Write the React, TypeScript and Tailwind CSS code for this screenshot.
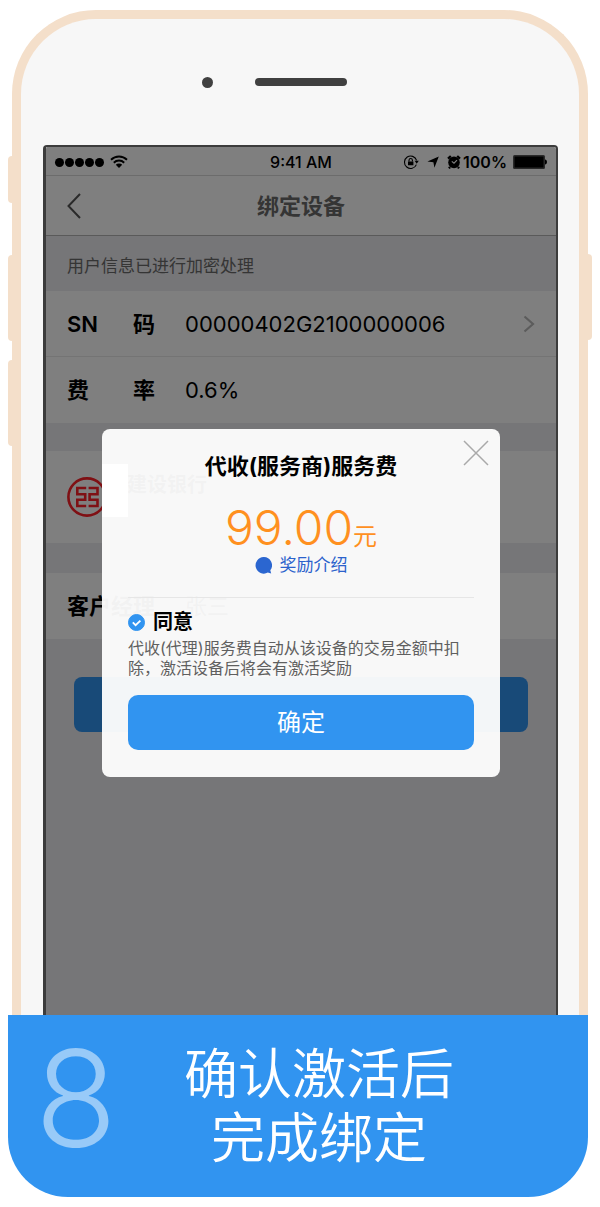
import { useState } from "react";
import type { ReactNode } from "react";

const SIDE_BUTTONS = [
  "-left-[13px] top-[137px] h-[47px] rounded-l",
  "-left-[13px] top-[236px] h-[86px] rounded-l",
  "-left-[13px] top-[341px] h-[86px] rounded-l",
  "-right-[13px] top-[235px] h-[86px] rounded-r",
];

export default function App() {
  return (
    <main className="flex min-h-screen flex-col bg-white pt-[10px] pb-[10px] font-[Inter,'Noto_Sans_CJK_SC',sans-serif]">
      <PhoneFrame>
        <StatusBar />
        <DevicePage />
        <div className="absolute inset-0 flex items-start justify-center bg-black/50 px-14 pt-[282px]">
          <FeeDialog />
        </div>
      </PhoneFrame>

      {/* Paso */}
      <footer className="mr-3 ml-2 flex h-[182px] rounded-b-[60px] bg-[#3194f0] text-white">
        <span className="w-[136px] pt-4 text-center text-[134px] leading-[134px] font-[350] text-white/50">
          8
        </span>
        <h1 className="pt-7 pl-[40px] text-center text-[54px] leading-[64px] font-[350]">
          确认激活后
          <br />
          完成绑定
        </h1>
      </footer>
    </main>
  );
}

function PhoneFrame({ children }: { children: ReactNode }) {
  return (
    <div className="relative mx-3 flex flex-1 flex-col rounded-t-[84px] border-[9px] border-b-0 border-[#f4dfca] bg-[#f7f7f7] pr-[21px] pl-[22px]">
      {SIDE_BUTTONS.map((position) => (
        <span
          key={position}
          className={`absolute w-1 bg-[#f4dfca] ${position}`}
        />
      ))}
      <div className="grid h-[126px] grid-cols-[1fr_auto_1fr] items-center gap-[42px]">
        <span className="size-[11px] justify-self-end rounded-full bg-[#404040]" />
        <span className="h-2 w-[92px] rounded-full bg-[#404040]" />
      </div>
      <div className="relative flex flex-1 flex-col overflow-hidden rounded-t border-2 border-b-0 border-l-[3px] border-[#3c3c3c] bg-[#ececf0]">
        {children}
      </div>
    </div>
  );
}

function StatusBar() {
  return (
    <div className="grid h-[29px] grid-cols-[1fr_auto_1fr] items-center border-b border-[#d8d8d8] bg-white px-[9px] pt-[2px] text-base leading-5 font-semibold text-black">
      <div className="flex items-center gap-[6px]">
        <div className="flex gap-px">
          {[1, 2, 3, 4, 5].map((i) => (
            <span key={i} className="size-[9px] rounded-full bg-black" />
          ))}
        </div>
        <svg viewBox="0 0 18 14" className="h-[14px] w-[18px]" fill="none">
          <path
            d="M1 4.8a11.4 11.4 0 0 1 16 0M3.8 7.7a7.4 7.4 0 0 1 10.4 0"
            stroke="#000"
            strokeWidth="1.9"
          />
          <path d="M5.8 9.8a4.6 4.6 0 0 1 6.4 0L9 13z" fill="#000" />
        </svg>
      </div>
      <span className="font-medium">9:41 AM</span>
      <div className="flex items-center justify-end">
        <svg viewBox="0 0 16 16" className="mr-2 size-4" fill="none">
          <path
            d="M13.6 6.4A6.2 6.2 0 1 0 13.4 10.6"
            stroke="#000"
            strokeWidth="1.1"
          />
          <path d="M11.6 6.8h4.2l-2.1 3z" fill="#000" />
          <path d="M5 7.4h5.4v3.8H5z" fill="#000" />
          <path
            d="M6 7.6V6.2a1.7 1.7 0 0 1 3.4 0v1.4"
            stroke="#000"
            strokeWidth="1.1"
          />
        </svg>
        <svg viewBox="0 0 12 12" className="mr-2 size-3">
          <path d="M11.8.4 7.4 11.8 6.4 6.2.4 5.4z" />
        </svg>
        <svg viewBox="0 0 14 14" className="mr-[2px] size-[14px]" fill="none">
          <circle cx="7" cy="7.4" r="5.8" fill="#000" />
          <path
            d="M1 3.6 3.8 1M13 3.6 10.2 1M3 12l-1 1.4M11 12l1 1.4"
            stroke="#000"
            strokeWidth="2.2"
          />
          <path d="m4.8 6.4 2.2 1.8L10 5.2" stroke="#fff" strokeWidth="1.2" />
        </svg>
        <span>100%</span>
        <svg viewBox="0 0 34 14" className="ml-[6px] h-[14px] w-[34px]">
          <rect width="32" height="14" rx="1.5" fill="#555" />
          <rect x="1.5" y="1.5" width="29" height="11" />
          <path d="M32 4.5c2.6 0 2.6 5 0 5z" />
        </svg>
      </div>
    </div>
  );
}

function DevicePage() {
  return (
    <div className="flex flex-col text-black">
      <header className="grid h-[60px] grid-cols-[1fr_auto_1fr] items-center border-b border-[#b4b4b4] bg-white px-[21px] text-[#6a6a6a]">
        <button type="button" aria-label="返回">
          <svg
            viewBox="0 0 14 26"
            className="h-[26px] w-[14px]"
            fill="none"
            stroke="#555"
            strokeWidth="2"
          >
            <path d="M13 1 1.5 13 13 25" />
          </svg>
        </button>
        <h2 className="text-[22px] leading-7 font-bold">绑定设备</h2>
      </header>

      <p className="px-[21px] pt-[18px] pb-[13px] text-[17px] leading-6 text-[#6a6a6a]">
        用户信息已进行加密处理
      </p>

      <div className="divide-y divide-[#e8e8e8] bg-white">
        <InfoRow label={["SN", "码"]} value="00000402G2100000006" arrow />
        <InfoRow label={["费", "率"]} value="0.6%" />
      </div>

      {/* Banco */}
      <div className="mt-7 flex h-[92px] items-center bg-white px-[21px]">
        <BankLogo />
        <p className="-mt-6 pl-5 text-[20px] leading-6 font-bold">建设银行</p>
      </div>

      <div className="mt-[30px] bg-white">
        <InfoRow label={["客户经理"]} value="张三" />
      </div>

      <button
        type="button"
        aria-label="提交"
        className="mx-7 mt-[38px] h-[55px] rounded-lg bg-[#3194f0]"
      />
    </div>
  );
}

type InfoRowProps = {
  label: string[];
  value: string;
  arrow?: boolean;
};

function InfoRow({ label, value, arrow }: InfoRowProps) {
  return (
    <div className="flex h-[66px] items-center px-[21px] text-[22px] leading-7">
      <div className="flex w-[88px] justify-between font-semibold">
        {label.map((part) => (
          <span key={part}>{part}</span>
        ))}
      </div>
      <span className="flex-1 pl-[30px]">{value}</span>
      {arrow && (
        <svg
          viewBox="0 0 12 18"
          className="h-[18px] w-3"
          fill="none"
          stroke="#b8b8b8"
          strokeWidth="2.2"
        >
          <path d="m1.5 1.5 8.5 7.5-8.5 7.5" />
        </svg>
      )}
    </div>
  );
}

function BankLogo() {
  return (
    <svg
      viewBox="0 0 40 40"
      className="size-10"
      fill="none"
      stroke="#ff2028"
      strokeWidth="2.6"
    >
      <circle cx="20" cy="20" r="18.6" />
      <path d="M19.2 11h-8.900v6.200h7.900v5.600h-7.900V29h8.900M21.600 11h8.900v6.200h-7.900v5.600h7.900V29h-8.900" />
    </svg>
  );
}

function FeeDialog() {
  const [agreed, setAgreed] = useState(true);

  return (
    <section
      role="dialog"
      aria-labelledby="fee-title"
      className="relative w-full rounded-lg bg-white/95 px-[26px] pt-[22px] pb-[27px]"
    >
      <span className="absolute top-[35px] left-0 h-[53px] w-[26px] bg-white" />
      <button
        type="button"
        aria-label="关闭"
        className="absolute top-[11px] right-[11px]"
      >
        <svg
          viewBox="0 0 26 26"
          className="size-[26px]"
          stroke="#a9a9a9"
          strokeWidth="1.5"
        >
          <path d="m1 1 24 24M25 1 1 25" />
        </svg>
      </button>

      <h2
        id="fee-title"
        className="text-center text-[22px] leading-[30px] font-bold text-black"
      >
        代收(服务商)服务费
      </h2>
      <p className="flex items-baseline justify-center pt-[27px] leading-10 text-[#ff901f]">
        <span className="text-[48px] font-light">99.00</span>
        <span className="text-[24px]">元</span>
      </p>
      <a
        href="#reward"
        className="-mt-1 flex items-center justify-center gap-2 text-[17px] leading-6 text-[#2b62cc]"
      >
        <svg viewBox="0 0 17 17" className="size-[17px]">
          <path
            d="M8.5 0a8.3 8.3 0 1 0 4.3 15.6l3.4.9-.9-3.2A8.3 8.3 0 0 0 8.5 0z"
            fill="#2b66d0"
          />
        </svg>
        奖励介绍
      </a>

      <label className="mt-5 flex items-center gap-2 border-t border-[#e6e6e6] pt-[10px] text-[20px] leading-7 font-bold text-black">
        <span className="relative size-[17px]">
          <input
            type="checkbox"
            checked={agreed}
            onChange={(e) => setAgreed(e.target.checked)}
            className="block size-[17px] appearance-none rounded-full border border-[#3194f0] checked:bg-[#3194f0]"
          />
          {agreed && (
            <svg
              viewBox="0 0 17 17"
              className="pointer-events-none absolute inset-0"
              fill="none"
              stroke="#fff"
              strokeWidth="1.8"
            >
              <path d="m4.8 8.4 2.8 2.8 4.8-4.6" />
            </svg>
          )}
        </span>
        同意
      </label>
      <p className="pt-[2px] text-base leading-5 text-[#5f5f5f]">
        代收(代理)服务费自动从该设备的交易金额中扣除，激活设备后将会有激活奖励
      </p>
      <button
        type="button"
        className="mt-[17px] h-[55px] w-full rounded-[10px] bg-[#3194f0] text-[24px] leading-8 text-white"
      >
        确定
      </button>
    </section>
  );
}
